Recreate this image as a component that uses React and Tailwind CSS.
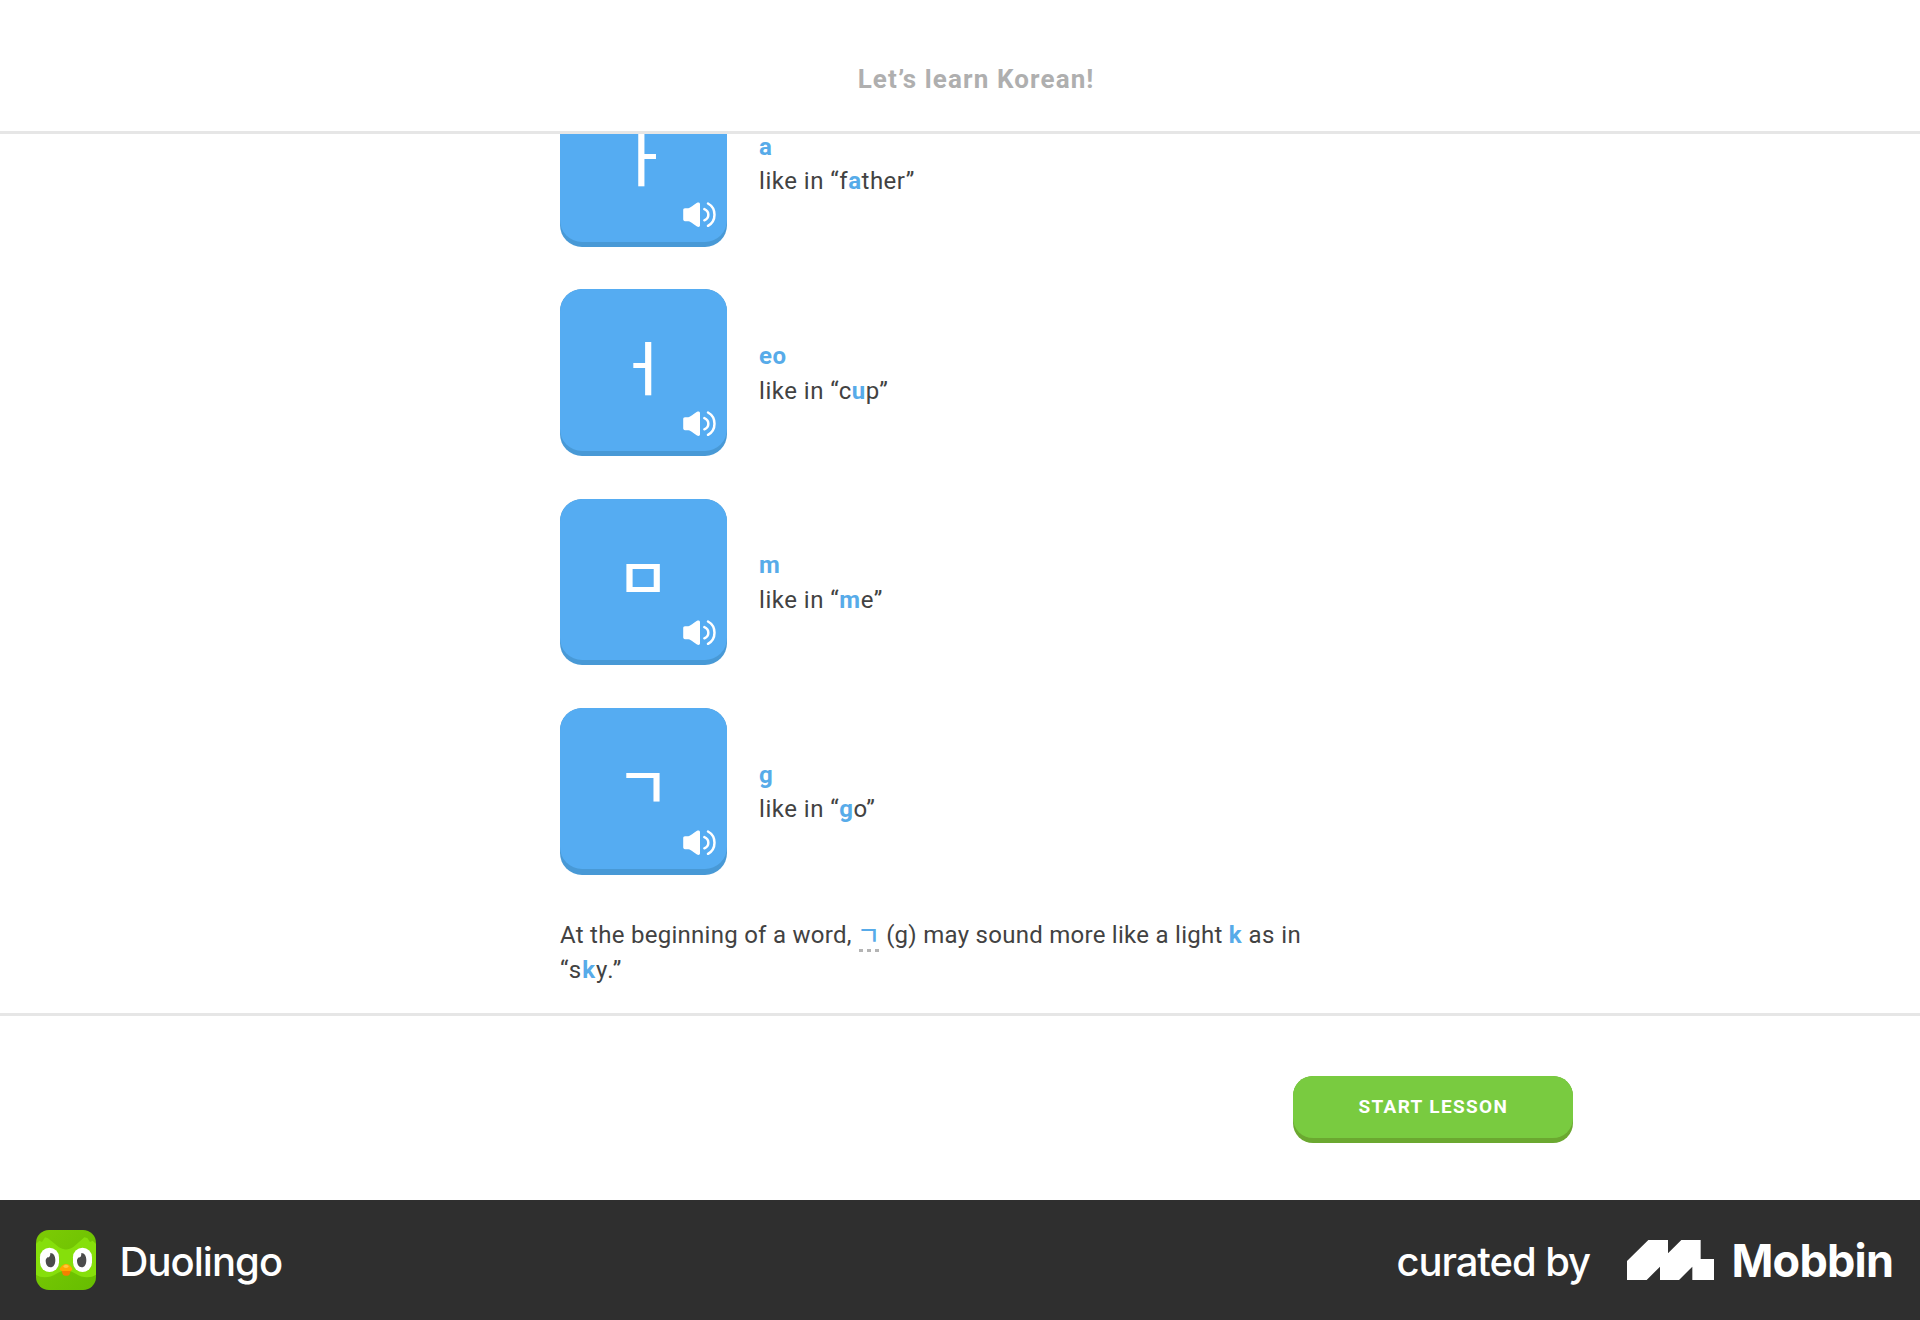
const CARDS = [
  { jamo: "ㅏ", sound: "a", before: "f", key: "a", after: "ther" },
  { jamo: "ㅓ", sound: "eo", before: "c", key: "u", after: "p" },
  { jamo: "ㅁ", sound: "m", before: "", key: "m", after: "e" },
  { jamo: "ㄱ", sound: "g", before: "", key: "g", after: "o" },
];

function Speaker() {
  return (
    <svg
      className="absolute right-[11.200px] bottom-[19.700px] h-[25.3px] w-[32.7px] overflow-visible"
      viewBox="0 0 98 76"
      fill="none"
      aria-hidden="true"
    >
      <path
        d="M6 18.500H16C21 18 26 14 31 10L42 2.500C46 0 51 1 51 6V70C51 75 46 76 42 73.500L31 66C26 62 21 58 16 57.500H6C2 57.500 0.500 55 0.500 51V25C0.500 21 2 18.500 6 18.500Z"
        fill="white"
      />
      <path d="M64 21.500C80 28 80 48 64 55" stroke="white" strokeWidth="7.500" strokeLinecap="round" />
      <path d="M75 4.500C101 19 101 57 75 71.500" stroke="white" strokeWidth="7.500" strokeLinecap="round" />
    </svg>
  );
}

function LetterRow({ jamo, sound, before, key_, after }) {
  return (
    <div className="flex items-center">
      <button className="relative h-[166.67px] w-[166.67px] shrink-0 overflow-hidden rounded-[22px] bg-[#4899d6]">
        <span className="absolute inset-x-0 top-0 block h-[161.500px] rounded-[22px] bg-[#55acf2] pr-px font-['Noto_Sans_CJK_KR',sans-serif] text-[58px] leading-[152px] font-medium text-white">
          {jamo}
        </span>
        <Speaker />
      </button>
      <div className="mt-[2px] ml-[32.400px] text-2xl leading-[34.67px] tracking-[0.5px]">
        <div className="font-bold text-[#57abe9]">{sound}</div>
        <div>
          like in “{before}
          <b className="font-bold text-[#57abe9]">{key_}</b>
          {after}”
        </div>
      </div>
    </div>
  );
}

function Owl() {
  return (
    <svg className="h-[60px] w-[60px] rounded-[13px]" viewBox="0 0 180 180" aria-hidden="true">
      <defs>
        <linearGradient id="feathers" x1="0" y1="0" x2="1" y2="1">
          <stop offset="0" stopColor="#7dcb05" />
          <stop offset="1" stopColor="#66bd00" />
        </linearGradient>
      </defs>
      <rect width="180" height="180" fill="url(#feathers)" />
      <path
        d="M0 42L10 32L18 36L27 22L36 25L68 51C82 61 98 61 112 51L145 22L154 24L162 36L170 32L180 42V134C165 145 138 144 119 131C101 119 79 119 61 131C42 144 15 145 0 134Z"
        fill="#86df0b"
      />
      <rect x="12" y="53" width="57" height="73" rx="28.500" fill="white" />
      <rect x="111" y="53" width="57" height="73" rx="28.500" fill="white" />
      <path d="M43 69C53 69 58 79 58 90C58 103 53 112 43 112C34 112 29 103 29 91C30 87 32 83 35 82C40 83 43 79 43 69Z" fill="#4b4b4b" />
      <path d="M136 69C146 69 151 79 151 90C151 103 146 112 137 112C128 112 123 103 123 91C124 87 126 83 129 82C134 83 136 79 136 69Z" fill="#4b4b4b" />
      <path d="M76 119H105L101 133C98 139 83 139 80 133Z" fill="#f57f00" />
      <path d="M71 117C74 108 83 102 90 102C98 102 106 108 109 117C109 121 105 123 101 123H79C75 123 71 121 71 117Z" fill="#ffa800" />
      <path d="M82 109C86 103 94 103 98 109C98 113 94 114 90 114C86 114 82 113 82 109Z" fill="#ffc83c" />
    </svg>
  );
}

function MobbinMark() {
  return (
    <svg className="h-[40px] w-[87px]" viewBox="0 0 261 120" aria-hidden="true">
      <path
        d="M0 63L64 0H123V40L163 0H221V57H261V120H196V80L156 120H99V80L59 120H0Z"
        fill="white"
      />
    </svg>
  );
}

export default function App() {
  return (
    <div className="flex h-[1320px] w-[1920px] flex-col overflow-hidden bg-white font-['Roboto',sans-serif] text-[#424242]">
      <header className="flex h-[134px] shrink-0 border-b-[3px] border-[#e6e6e6] pt-[62.800px] pl-[857.700px]">
        <h1 className="text-[26px] leading-8 font-bold tracking-[1.120px] whitespace-nowrap text-[#afafaf]">
          Let’s learn Korean!
        </h1>
      </header>

      <main className="h-[879px] shrink-0 overflow-hidden">
        <div className="-mt-[54px] ml-[560px] w-[800px]">
          <div className="flex flex-col gap-[42.670px]">
            {CARDS.map((c) => (
              <LetterRow key={c.jamo} jamo={c.jamo} sound={c.sound} before={c.before} key_={c.key} after={c.after} />
            ))}
          </div>
          <div className="mt-[43.900px] text-2xl leading-[34.67px] whitespace-nowrap">
            <p className="flex h-[34.67px] tracking-[0.270px]">
              <span>At the beginning of a word,</span>
              <span className="relative ml-[6.900px] flex w-5 justify-center">
                <span className="relative -top-px -mx-2 font-['Noto_Sans_CJK_KR',sans-serif] text-[25px] font-medium tracking-normal text-[#57abe9]">
                  ㄱ
                </span>
                <span className="absolute inset-x-0 bottom-[1.200px] flex justify-between">
                  <i className="h-[3px] w-1 bg-[#b4b4b4]" />
                  <i className="h-[3px] w-1 bg-[#b4b4b4]" />
                  <i className="h-[3px] w-1 bg-[#b4b4b4]" />
                </span>
              </span>
              <span className="ml-[7.500px]">
                (g) may sound more like a light <b className="font-bold text-[#57abe9]">k</b>
                <span className="tracking-[0.500px]"> as in</span>
              </span>
            </p>
            <p className="tracking-[1.100px]">
              “s<b className="font-bold text-[#57abe9]">k</b>y.”
            </p>
          </div>
        </div>
      </main>

      <section className="flex h-[187px] shrink-0 items-start border-t-[3px] border-[#e6e6e6] pt-[60.300px] pl-[1293.300px]">
        <button className="h-[66.500px] w-[280px] rounded-[20px] bg-[#6ba830] pb-[5px]">
          <span className="flex h-full items-center justify-center rounded-[20px] bg-[#79cb40] text-[19px] leading-6 font-bold tracking-[1.330px] text-white">
            START LESSON
          </span>
        </button>
      </section>

      <footer className="flex h-[120px] shrink-0 items-center bg-[#2f2f2f] pl-9 font-['Inter',sans-serif] whitespace-nowrap text-white">
        <Owl />
        <span className="mt-[4px] ml-[23.500px] text-[40px] leading-[48px] font-[550] tracking-[-0.950px]">Duolingo</span>
        <div className="mr-[24px] ml-auto flex items-center">
          <span className="mt-[4px] w-[230.500px] text-[40px] leading-[48px] font-[550] tracking-[-1.080px]">
            curated by
          </span>
          <MobbinMark />
          <span className="mt-[1px] ml-[17.500px] w-[164.500px] text-[45px] leading-[54px] font-bold tracking-[-0.800px]">
            Mobbin
          </span>
        </div>
      </footer>
    </div>
  );
}
